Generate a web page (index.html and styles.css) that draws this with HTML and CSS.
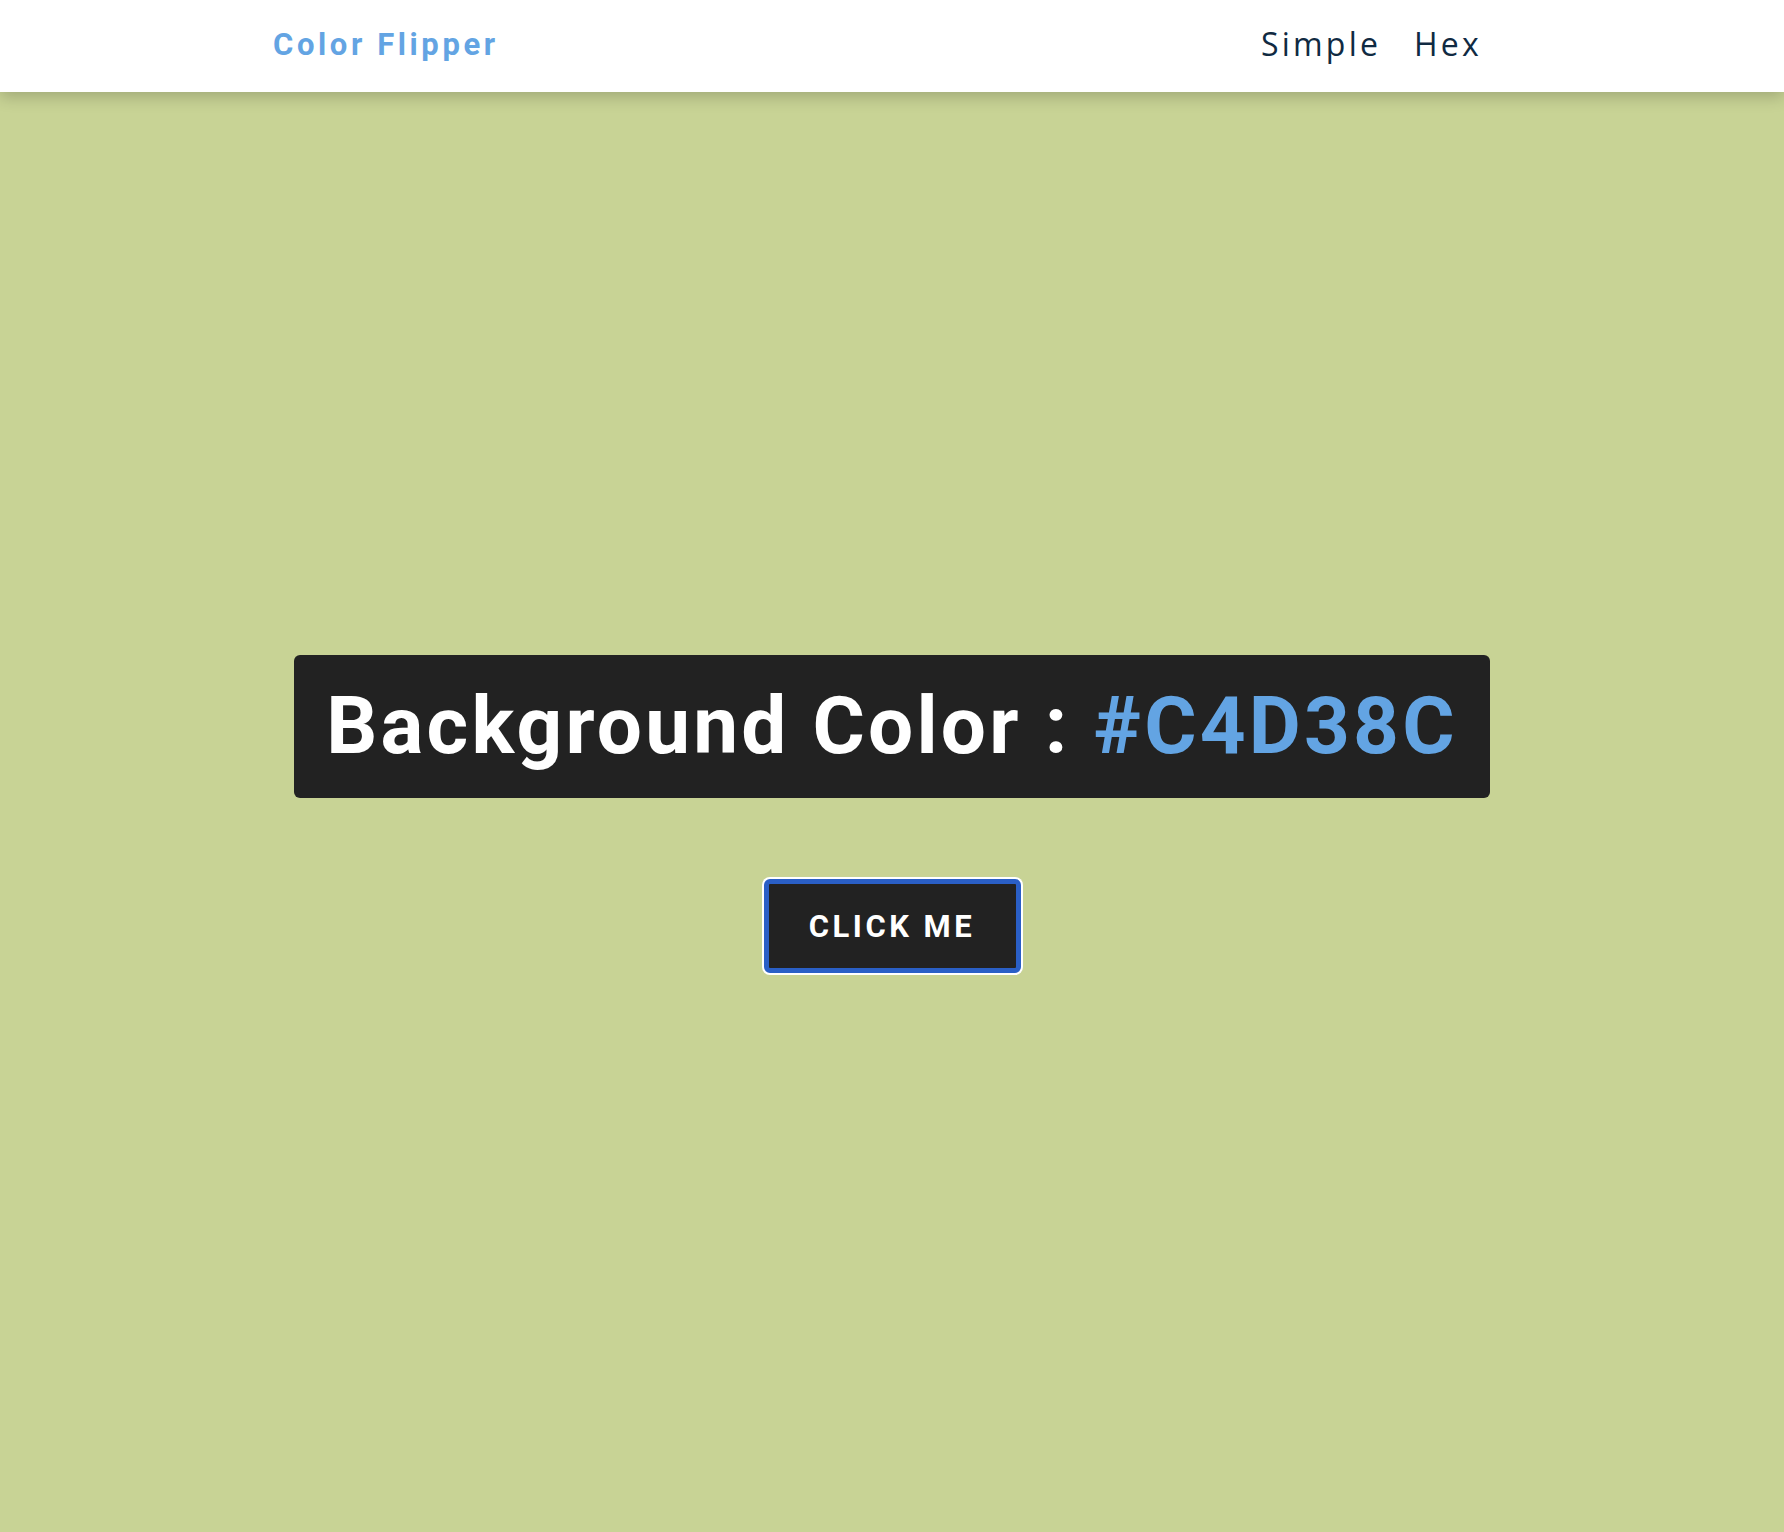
FILE: index.html
```html
<!DOCTYPE html>
<html lang="en">
<head>
<meta charset="UTF-8">
<title>Color Flipper</title>
<link rel="stylesheet" href="styles.css">
</head>
<body>
<nav class="nav">
  <div class="nav-center">
    <h4 class="logo">Color Flipper</h4>
    <ul class="nav-links">
      <li><a href="#">Simple</a></li>
      <li><a href="#">Hex</a></li>
    </ul>
  </div>
</nav>
<main class="main">
  <div class="container">
    <h2 class="title">Background Color : <span class="color">#C4D38C</span></h2>
    <button class="btn">Click Me</button>
  </div>
</main>
</body>
</html>
```
FILE: styles.css
```css
* { box-sizing: border-box; margin: 0; padding: 0; }
body {
  background: #c8d395;
  font-family: Roboto, "Liberation Sans", sans-serif;
  min-height: 1532px;
}
.nav {
  height: 92px;
  background: #ffffff;
  box-shadow: 0 5px 15px rgba(0, 0, 0, 0.2);
  position: relative;
  z-index: 1;
}
.nav-center {
  width: 1209px;
  margin-left: 273px;
  height: 100%;
  display: flex;
  align-items: center;
  justify-content: space-between;
}
.logo {
  font-family: Roboto, sans-serif;
  font-weight: 700;
  font-size: 31px;
  letter-spacing: 3.6px;
  color: #63a4e3;
  padding-bottom: 4px;
}
.nav-links {
  list-style: none;
  display: flex;
  gap: 33px;
  padding-bottom: 6px;
}
.nav-links a {
  text-decoration: none;
  font-family: "Open Sans", sans-serif;
  font-size: 32px;
  letter-spacing: 3.2px;
  color: #102a42;
}
.main {
  min-height: 1440px;
  display: flex;
  justify-content: center;
  padding-top: 563px;
}
.container {
  display: flex;
  flex-direction: column;
  align-items: center;
}
.title {
  width: 1196px;
  height: 143px;
  background: #222222;
  color: #ffffff;
  border-radius: 6px;
  font-size: 80px;
  font-weight: 700;
  letter-spacing: 3.2px;
  text-align: center;
  line-height: 143px;
  margin-bottom: 81px;
}
.color { color: #63a4e3; }
.btn {
  width: 257px;
  height: 94px;
  background: #222222;
  color: #ffffff;
  border: 5px solid #2a5fc6;
  border-radius: 6px;
  box-shadow: 0 0 0 2px #ffffff;
  font-family: Roboto, sans-serif;
  font-weight: 700;
  font-size: 31px;
  letter-spacing: 3.5px;
  text-transform: uppercase;
  cursor: pointer;
}
```
